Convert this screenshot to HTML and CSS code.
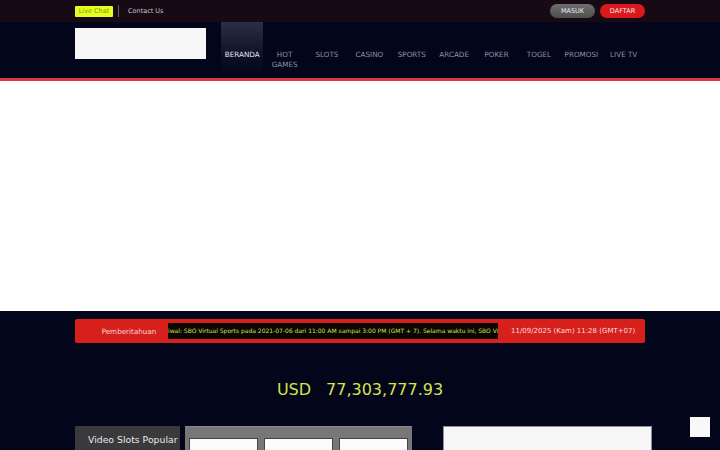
FILE: index.html
```html
<!DOCTYPE html>
<html>
<head>
<meta charset="utf-8">
<link rel="stylesheet" href="styles.css">
</head>
<body>
<div class="topbar">
  <div class="wrap topbar-inner">
    <div class="top-left">
      <span class="livechat">Live Chat</span>
      <span class="sep"></span>
      <span class="contact">Contact Us</span>
    </div>
    <div class="top-right">
      <span class="btn btn-masuk">MASUK</span>
      <span class="btn btn-daftar">DAFTAR</span>
    </div>
  </div>
</div>
<div class="navbar">
  <div class="wrap nav-inner">
    <div class="logo"></div>
    <ul class="menu">
      <li class="active">BERANDA</li>
      <li>HOT GAMES</li>
      <li>SLOTS</li>
      <li>CASINO</li>
      <li>SPORTS</li>
      <li>ARCADE</li>
      <li>POKER</li>
      <li>TOGEL</li>
      <li>PROMOSI</li>
      <li>LIVE TV</li>
    </ul>
  </div>
</div>
<div class="banner"></div>
<div class="main">
  <div class="wrap">
    <div class="notice">
      <div class="notice-label">Pemberitahuan</div>
      <div class="marquee"><span>iwal: SBO Virtual Sports pada 2021-07-06 dari 11:00 AM sampai 3:00 PM (GMT + 7). Selama waktu ini, SBO Vi</span></div>
      <div class="notice-date">11/09/2025 (Kam) 11:28 (GMT+07)</div>
    </div>
    <div class="jackpot"><span class="cur">USD</span><span>77,303,777.93</span></div>
    <div class="games">
      <div class="tab">Video Slots Popular</div>
      <div class="slots">
        <div class="card"></div>
        <div class="card"></div>
        <div class="card"></div>
      </div>
      <div class="sidebox"></div>
    </div>
  </div>
  <div class="totop"></div>
</div>
</body>
</html>
```
FILE: styles.css
```css
* { box-sizing: border-box; }
html, body { margin: 0; padding: 0; }
body {
  background: #03051a;
  font-family: "DejaVu Sans", sans-serif;
  width: 720px;
  height: 450px;
  overflow: hidden;
  position: relative;
}
.wrap { width: 570px; margin: 0 auto; }
.topbar { background: #170a14; height: 22px; }
.topbar-inner { display: flex; justify-content: space-between; align-items: center; height: 22px; }
.top-left { display: flex; align-items: center; }
.livechat {
  background: #e2ff1e;
  color: #8a8f2a;
  font-size: 6.5px;
  height: 11px;
  line-height: 11px;
  width: 38px;
  text-align: center;
  white-space: nowrap;
  border-radius: 1px;
}
.sep { width: 1px; height: 12px; background: #6a6068; margin: 0 9px 0 5px; }
.contact { color: #c9c3c8; font-size: 6.5px; white-space: nowrap; }
.top-right { display: flex; gap: 5px; }
.btn {
  width: 45px; height: 14px; line-height: 14px; border-radius: 7px;
  font-size: 6.5px; text-align: center; color: #f0e8ea;
}
.btn-masuk { background: linear-gradient(#6e6e6e, #4d4d4d); }
.btn-daftar { background: #d9191c; }
.navbar {
  height: 59px;
  background: #03051a;
  border-bottom: 3px solid #d9393e;
  box-shadow: 0 1px 0 #f29a9c;
}
.nav-inner { display: flex; height: 56px; }
.logo { width: 131px; height: 31px; background: #f7f7f7; margin-top: 6px; flex-shrink: 0; }
.menu { display: flex; list-style: none; margin: 0 0 0 15px; padding: 0; }
.menu li {
  width: 42.4px;
  color: #8e93a6;
  font-size: 7.2px;
  line-height: 10px;
  text-align: center;
  padding-top: 28px;
  height: 53px;
}
.menu li.active {
  color: #e6e8ef;
  background: linear-gradient(#2a2f44, #0b0e22 70%, #03051a);
}
.banner { height: 230px; background: #ffffff; }
.main { padding-top: 8px; position: relative; height: 139px; }
.notice {
  display: flex; align-items: center; height: 24px;
  background: #d7201c; border-radius: 2px;
}
.notice-label { width: 93px; color: #f4d8d6; font-size: 7.2px; text-align: center; padding-left: 15px; flex-shrink: 0; }
.marquee {
  width: 330px; height: 16px; background: #0b0604; overflow: hidden; white-space: nowrap;
  color: #d8e04c; font-size: 6px; line-height: 16px; flex-shrink: 0;
}
.notice-date { color: #f5dede; font-size: 7px; padding-left: 13px; white-space: nowrap; }
.jackpot {
  text-align: center; color: #d7e24c; font-size: 16px; margin-top: 37px; height: 20px; line-height: 20px;
}
.cur { margin-right: 15px; }
.games { display: flex; margin-top: 26px; }
.tab {
  width: 105px; height: 30px; background: #3a3a3c; color: #e9e9ea; flex-shrink: 0;
  font-size: 9.3px; padding: 8px 0 0 13px; white-space: nowrap;
}
.slots {
  margin-left: 5px; width: 227px; height: 30px; background: #777777; flex-shrink: 0;
  border-top: 1px solid #8a8a8a; display: flex; gap: 6px; padding: 11px 3px 0 4px;
}
.card { width: 69px; height: 20px; background: #fbfbfb; border: 1px solid #444; border-bottom: 0; }
.sidebox {
  margin-left: 31px; width: 209px; height: 30px; background: #f6f6f7; border: 1px solid #8f8f9a; flex-shrink: 0;
}
.totop {
  position: absolute; left: 690px; top: 106px; width: 20px; height: 20px; background: #f8f8f8;
}
```
